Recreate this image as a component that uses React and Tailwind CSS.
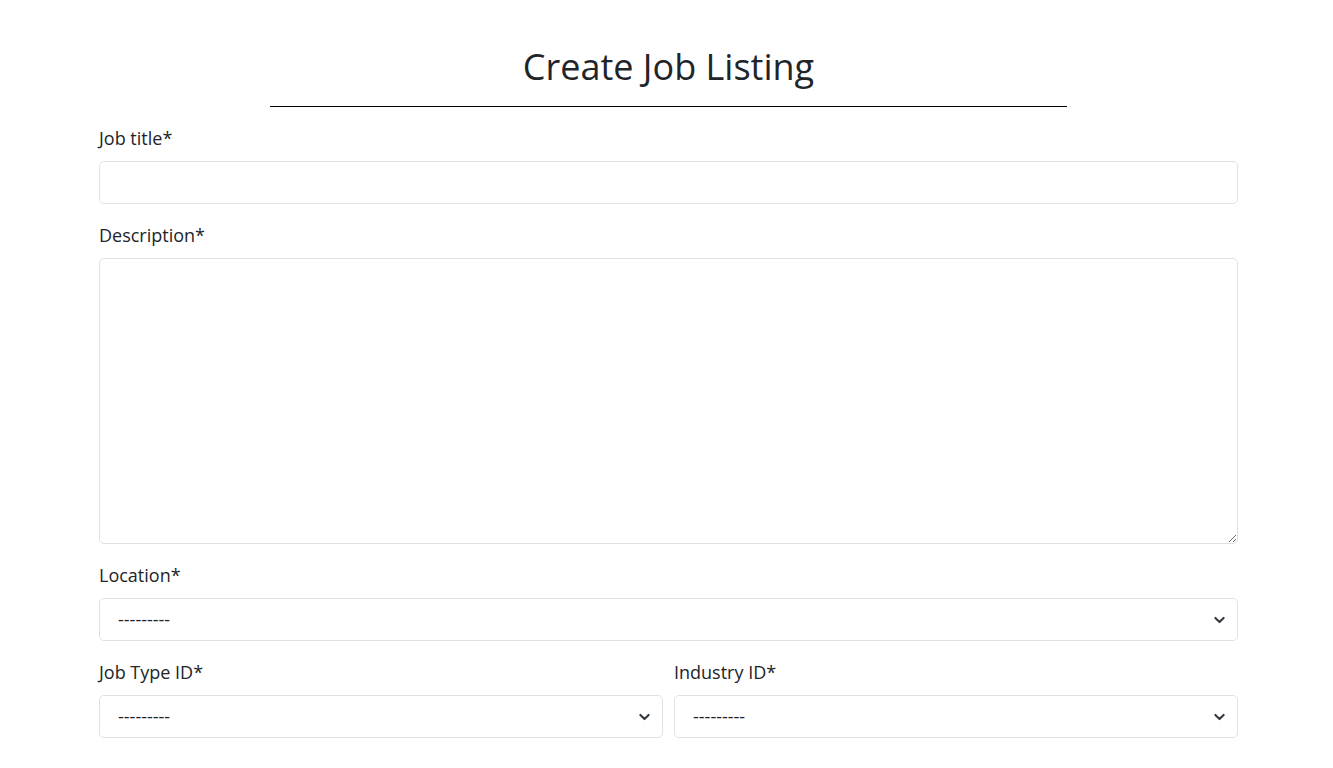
import React from 'react';

const Chevron = () => (
    <svg className="pointer-events-none absolute right-[13px] top-1/2 -translate-y-1/2 w-[11px] h-[11px]" viewBox="0 0 16 16" fill="none" stroke="#343a40" strokeWidth="3" strokeLinecap="round" strokeLinejoin="round">
        <path d="M2 5l6 6 6-6" />
    </svg>
);

const SelectField = ({ label }) => (
    <div>
        <label className="block text-[18px] text-[#212529] leading-[27px] mb-[9px]">{label}</label>
        <div className="relative">
            <select className="w-full h-[43px] appearance-none border border-[#dee2e6] rounded-[5px] bg-white pl-[18px] pr-[36px] text-[18px] text-[#212529] outline-none">
                <option>---------</option>
            </select>
            <Chevron />
        </div>
    </div>
);

const App = () => {
    return (
        <div className="bg-white min-h-screen" style={{ fontFamily: '"Open Sans", sans-serif' }}>
            <div className="w-[1139px] ml-[99px] pt-[40px]">
                {/* Header */}
                <div className="flex flex-col items-center">
                    <h1 className="text-[36px] leading-[54px] text-[#212529] font-normal">Create Job Listing</h1>
                    <div className="w-[797px] h-px bg-black mt-[12px]"></div>
                </div>

                <form className="mt-[18px]">
                    <label className="block text-[18px] text-[#212529] leading-[27px] mb-[9px]">Job title*</label>
                    <input type="text" className="block w-full h-[43px] border border-[#dee2e6] rounded-[5px] px-[18px] outline-none" />

                    <label className="block text-[18px] text-[#212529] leading-[27px] mt-[18px] mb-[9px]">Description*</label>
                    <textarea className="block w-full h-[286px] border border-[#dee2e6] rounded-[5px] px-[18px] outline-none"></textarea>

                    <div className="mt-[18px]">
                        <SelectField label="Location*" />
                    </div>

                    <div className="mt-[18px] grid grid-cols-2 gap-[11px]">
                        <SelectField label="Job Type ID*" />
                        <SelectField label="Industry ID*" />
                    </div>
                </form>
            </div>
        </div>
    );
};

export default App;
